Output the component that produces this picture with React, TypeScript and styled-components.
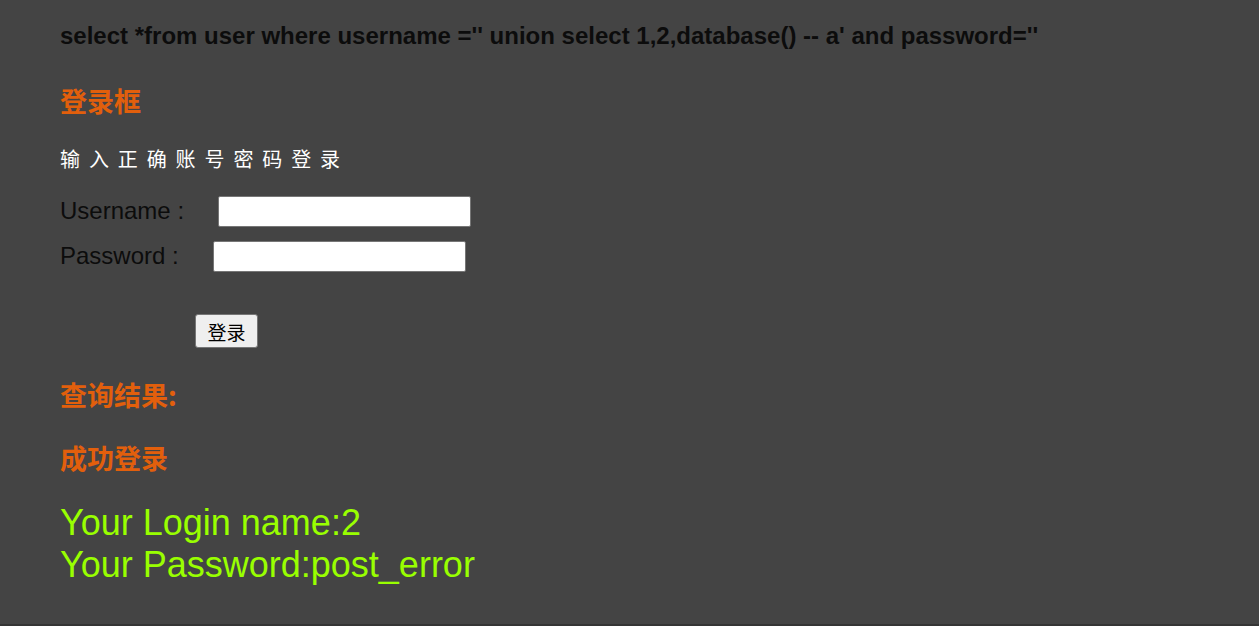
import React from "react";
import styled, { createGlobalStyle } from "styled-components";

const Global = createGlobalStyle`
  html, body { margin: 0; padding: 0; background: #444444; }
  body { font-family: "Liberation Sans", Arial, "Noto Sans CJK SC", sans-serif; }
`;

const Page = styled.div`
  box-sizing: border-box;
  width: 1259px;
  height: 626px;
  background: #444444;
  border-bottom: 2px solid #353535;
  padding: 20px 0 0 60px;
  display: flex;
  flex-direction: column;
  align-items: flex-start;
`;

const Sql = styled.div`
  font-size: 24px;
  font-weight: bold;
  color: #0c0c0c;
  line-height: 32px;
`;

const Heading = styled.div<{ $top: number }>`
  margin-top: ${(p) => p.$top}px;
  font-family: "Noto Sans CJK SC", sans-serif;
  font-size: 27px;
  font-weight: bold;
  color: #e25f0c;
  line-height: 34px;
`;

const Hint = styled.div`
  margin-top: 28px;
  font-family: "Noto Sans CJK SC", sans-serif;
  font-size: 20px;
  letter-spacing: 8.9px;
  color: #ffffff;
  line-height: 26px;
`;

const Row = styled.div<{ $top: number; $gap: number }>`
  margin-top: ${(p) => p.$top}px;
  display: flex;
  align-items: center;
  gap: ${(p) => p.$gap}px;
  height: 30px;
`;

const Label = styled.span`
  font-size: 24px;
  color: #0c0c0c;
`;

const Input = styled.input`
  box-sizing: border-box;
  width: 253px;
  height: 31px;
  border: 1px solid #767676;
  border-radius: 2px;
  background: #ffffff;
  outline: none;
`;

const Button = styled.button`
  box-sizing: border-box;
  margin: 43px 0 0 135px;
  width: 63px;
  height: 34px;
  padding: 0;
  font-family: "Noto Sans CJK SC", sans-serif;
  font-size: 19px;
  color: #000;
  background: #efefef;
  border: 1px solid #767676;
  border-radius: 3px;
`;

const Result = styled.div`
  margin-top: 27px;
  font-size: 36px;
  line-height: 42px;
  color: #99ff00;
`;

export default function App() {
  return (
    <>
      <Global />
      <Page>
        <Sql>select *from user where username ='' union select 1,2,database() -- a' and password=''</Sql>
        <Heading $top={32}>登录框</Heading>
        <Hint>输入正确账号密码登录</Hint>
        <Row $top={24} $gap={34}>
          <Label>Username :</Label>
          <Input type="text" />
        </Row>
        <Row $top={15} $gap={34}>
          <Label>Password :</Label>
          <Input type="password" />
        </Row>
        <Button>登录</Button>
        <Heading $top={30}>查询结果:</Heading>
        <Heading $top={29}>成功登录</Heading>
        <Result>
          Your Login name:2
          <br />
          Your Password:post_error
        </Result>
      </Page>
    </>
  );
}
